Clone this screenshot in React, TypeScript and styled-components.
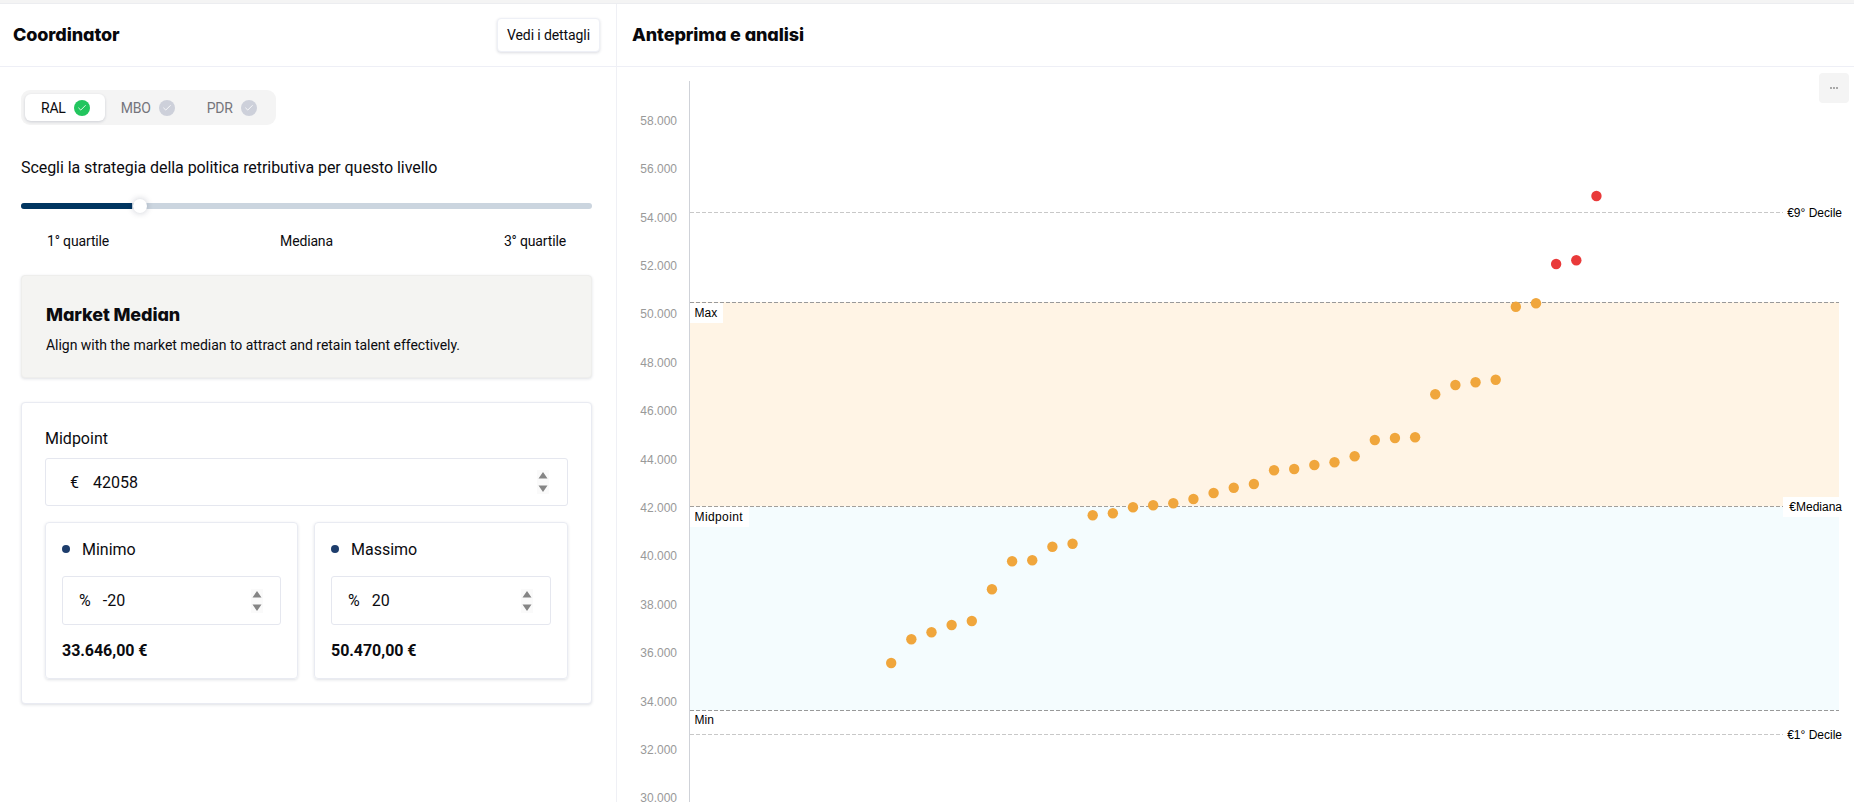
import React from "react";
import styled, { createGlobalStyle } from "styled-components";
import { Check } from "lucide-react";

const Global = createGlobalStyle`
  html, body { margin: 0; padding: 0; background: #fff; height: 100%; overflow: hidden; }
  #root { height: 100%; }
  * { box-sizing: border-box; }
`;

const BODY = `Roboto, "Liberation Sans", sans-serif`;
const HEAD = `Inter, Lato, "Liberation Sans", sans-serif`;

const Page = styled.div`
  height: 802px;
  display: flex;
  flex-direction: column;
  font-family: ${BODY};
  color: #0b0b0f;
`;
const TopStrip = styled.div`
  height: 4px;
  flex: none;
  background: #f4f4f4;
  border-bottom: 1px solid #ecedf0;
`;
const Main = styled.div`
  flex: 1;
  display: flex;
  min-height: 0;
`;
const LeftPanel = styled.section`
  width: 617px;
  flex: none;
  border-right: 1px solid #eff0f5;
  display: flex;
  flex-direction: column;
`;
const RightPanel = styled.section`
  flex: 1;
  min-width: 0;
  display: flex;
  flex-direction: column;
  position: relative;
`;
const PanelHeader = styled.header<{ $pad: number }>`
  height: 63px;
  flex: none;
  border-bottom: 1px solid #eeeff6;
  display: flex;
  align-items: center;
  justify-content: space-between;
  padding: 0 16px 0 ${(p) => p.$pad}px;
`;
const PanelTitle = styled.h1`
  margin: 0;
  font-family: ${HEAD};
  font-feature-settings: "cv11" 1;
  font-weight: 800;
  font-size: 18px;
  letter-spacing: -0.1px;
  line-height: 24px;
  color: #08080c;
`;
const DetailsButton = styled.button`
  width: 103px;
  height: 34px;
  margin-top: -1px;
  background: #fff;
  border: 1px solid #eef0f6;
  border-radius: 4px;
  box-shadow: 0 1px 3px rgba(30, 40, 70, 0.16);
  font-family: ${BODY};
  font-size: 14px;
  letter-spacing: -0.1px;
  color: #0b0b0f;
  padding: 0;
`;
const LeftBody = styled.div`
  padding: 23px 24px 0 21px;
  display: flex;
  flex-direction: column;
  align-items: stretch;
`;
const Tabs = styled.div`
  align-self: flex-start;
  width: 255px;
  height: 35px;
  padding: 4px;
  background: #f4f4f4;
  border-radius: 9px;
  display: flex;
`;
const Tab = styled.div<{ $active?: boolean }>`
  height: 27px;
  padding: 0 ${(p) => (p.$active ? 15 : 16)}px 0 16px;
  display: flex;
  align-items: center;
  gap: 8px;
  border-radius: 6px;
  font-size: 14px;
  letter-spacing: -0.2px;
  background: ${(p) => (p.$active ? "#fff" : "transparent")};
  color: ${(p) => (p.$active ? "#0b0b0f" : "#75757c")};
  box-shadow: ${(p) => (p.$active ? "0 1px 3px rgba(30,40,70,0.18)" : "none")};
`;
const CheckBadge = styled.span<{ $on?: boolean }>`
  width: 16px;
  height: 16px;
  border-radius: 50%;
  background: ${(p) => (p.$on ? "#22c55e" : "#cdd0da")};
  color: #fff;
  display: inline-flex;
  align-items: center;
  justify-content: center;
`;
const StrategyTitle = styled.p`
  margin: 32px 0 0;
  font-size: 16px;
  letter-spacing: -0.06px;
  line-height: 22px;
  color: #0b0b0f;
`;
const Slider = styled.div`
  margin-top: 24px;
  height: 6px;
  border-radius: 3px;
  background: #cbd5df;
  position: relative;
`;
const SliderFill = styled.div`
  height: 100%;
  background: #003560;
  border-radius: 3px 0 0 3px;
`;
const SliderThumb = styled.div`
  position: absolute;
  top: -4px;
  width: 14px;
  height: 14px;
  margin-left: -7px;
  background: #fff;
  border-radius: 50%;
  box-shadow: 0 0 6px rgba(30, 40, 70, 0.25);
`;
const SliderLabels = styled.div`
  margin-top: 23px;
  padding: 0 26px;
  display: flex;
  justify-content: space-between;
  font-size: 14px;
  letter-spacing: -0.15px;
  line-height: 18px;
`;
const StrategyCard = styled.div`
  margin-top: 25px;
  height: 103px;
  padding: 4px 24px 0;
  background: #f4f4f2;
  border: 1px solid #eeeeec;
  border-radius: 4px;
  box-shadow: 0 1px 3px rgba(30, 40, 70, 0.14);
  display: flex;
  flex-direction: column;
  justify-content: center;
`;
const StrategyName = styled.h2`
  margin: 0;
  font-family: ${HEAD};
  font-feature-settings: "cv11" 1;
  font-weight: 800;
  font-size: 18px;
  letter-spacing: -0.1px;
  line-height: 24px;
`;
const StrategyText = styled.p`
  margin: 8px 0 0;
  font-size: 14px;
  letter-spacing: -0.03px;
  line-height: 20px;
`;
const MidpointCard = styled.div`
  margin-top: 24px;
  height: 302px;
  padding: 25px 23px 24px;
  background: #fff;
  border: 1px solid #e9ebf2;
  border-radius: 4px;
  box-shadow: 0 1px 3px rgba(30, 40, 70, 0.14);
`;
const FieldLabel = styled.div`
  font-size: 16px;
  line-height: 22px;
`;
const NumberField = styled.div<{ $h: number; $pad: number; $gap: number; $spin: number }>`
  height: ${(p) => p.$h}px;
  padding: 0 ${(p) => p.$spin}px 0 ${(p) => p.$pad}px;
  border: 1px solid #e5e7ef;
  border-radius: 3px;
  background: #fff;
  display: flex;
  align-items: center;
  gap: ${(p) => p.$gap}px;
  font-size: 16px;
`;
const MidpointField = styled(NumberField)`
  margin-top: 8px;
`;
const FieldValue = styled.span`
  flex: 1;
`;
const SubGrid = styled.div`
  margin-top: 16px;
  display: grid;
  grid-template-columns: 253px 1fr;
  gap: 16px;
`;
const SubCard = styled.div`
  height: 157px;
  padding: 15px 16px 16px;
  border: 1px solid #e9ebf2;
  border-radius: 4px;
  box-shadow: 0 1px 3px rgba(30, 40, 70, 0.14);
  display: flex;
  flex-direction: column;
`;
const SubHead = styled.div`
  display: flex;
  align-items: center;
  gap: 12px;
  height: 22px;
  font-size: 16px;
`;
const Bullet = styled.span`
  width: 8px;
  height: 8px;
  border-radius: 50%;
  background: #1d3d6c;
`;
const SubField = styled(NumberField)`
  margin-top: 16px;
`;
const Amount = styled.div`
  margin-top: 16px;
  font-size: 16px;
  font-weight: 700;
  letter-spacing: -0.05px;
  line-height: 20px;
`;
const ChartArea = styled.div`
  flex: 1;
  min-height: 0;
  position: relative;
`;
const ChartSvg = styled.svg`
  display: block;
  width: 100%;
  height: 100%;
`;
const MoreButton = styled.div`
  position: absolute;
  top: 6px;
  right: 5px;
  width: 30px;
  height: 30px;
  border-radius: 4px;
  background: #f4f4f4;
  display: flex;
  align-items: center;
  justify-content: center;
  gap: 1px;
`;
const MoreDot = styled.i`
  width: 2px;
  height: 2px;
  background: #a9a9a9;
`;

const Spinner = () => (
  <svg width="12" height="24" viewBox="0 0 12 24" style={{ display: "block" }}>
    <rect width="12" height="24" fill="#fafafa" />
    <path d="M6 2 L10.5 8.5 H1.5 Z M6 22 L1.5 15.5 H10.5 Z" fill="#858585" />
  </svg>
);

const Amounts = ({ sym, val }: { sym: string; val: string }) => (
  <>
    <span>{sym}</span>
    <FieldValue>{val}</FieldValue>
    <Spinner />
  </>
);

const ticks: Array<[string, number]> = [
  ["58.000", 125], ["56.000", 172.5], ["54.000", 222], ["52.000", 270], ["50.000", 317.5],
  ["48.000", 366.5], ["46.000", 414.5], ["44.000", 463.5], ["42.000", 512], ["40.000", 560],
  ["38.000", 608.5], ["36.000", 657], ["34.000", 705.5], ["32.000", 753.5], ["30.000", 802],
];

const dotX = (i: number) => 891.2 + i * 20.15;
const dotY = [
  663, 639.3, 632.3, 625, 621, 589.3, 561.3, 560.3, 546.7, 543.7, 515.3, 513.3, 507.3, 505.3, 503.3,
  499, 493, 487.7, 484, 470.3, 469, 465, 462.3, 456.3, 440, 438, 437.3, 394.3, 385, 382.3, 379.7,
  306.7, 303.3, 264, 260.3, 196,
];

const App = () => (
  <Page>
    <Global />
    <TopStrip />
    <Main>
      <LeftPanel>
        <PanelHeader $pad={13}>
          <PanelTitle>Coordinator</PanelTitle>
          <DetailsButton>Vedi i dettagli</DetailsButton>
        </PanelHeader>
        <LeftBody>
          <Tabs>
            <Tab $active>
              RAL
              <CheckBadge $on><Check size={10} strokeWidth={2} /></CheckBadge>
            </Tab>
            <Tab>
              MBO
              <CheckBadge><Check size={10} strokeWidth={2} /></CheckBadge>
            </Tab>
            <Tab>
              PDR
              <CheckBadge><Check size={10} strokeWidth={2} /></CheckBadge>
            </Tab>
          </Tabs>
          <StrategyTitle>Scegli la strategia della politica retributiva per questo livello</StrategyTitle>
          <Slider>
            <SliderFill style={{ width: "19.5%" }} />
            <SliderThumb style={{ left: "20.8%" }} />
          </Slider>
          <SliderLabels>
            <span>1° quartile</span>
            <span>Mediana</span>
            <span>3° quartile</span>
          </SliderLabels>
          <StrategyCard>
            <StrategyName>Market Median</StrategyName>
            <StrategyText>Align with the market median to attract and retain talent effectively.</StrategyText>
          </StrategyCard>
          <MidpointCard>
            <FieldLabel>Midpoint</FieldLabel>
            <MidpointField $h={48} $pad={24} $gap={14} $spin={18}>
              <Amounts sym="€" val="42058" />
            </MidpointField>
            <SubGrid>
              <SubCard>
                <SubHead><Bullet />Minimo</SubHead>
                <SubField $h={49} $pad={16} $gap={12} $spin={17}>
                  <Amounts sym="%" val="-20" />
                </SubField>
                <Amount>33.646,00 €</Amount>
              </SubCard>
              <SubCard>
                <SubHead><Bullet />Massimo</SubHead>
                <SubField $h={49} $pad={16} $gap={12} $spin={17}>
                  <Amounts sym="%" val="20" />
                </SubField>
                <Amount>50.470,00 €</Amount>
              </SubCard>
            </SubGrid>
          </MidpointCard>
        </LeftBody>
      </LeftPanel>
      <RightPanel>
        <PanelHeader $pad={15}>
          <PanelTitle>Anteprima e analisi</PanelTitle>
        </PanelHeader>
        <ChartArea>
          <ChartSvg viewBox="617 67 1237 735" preserveAspectRatio="none">
            <rect x="690" y="302" width="1149" height="204.5" fill="#fff4e5" />
            <rect x="690" y="506.5" width="1149" height="204" fill="#f4fcfe" />
            <line x1="689.5" y1="81" x2="689.5" y2="802" stroke="#cfd2d8" />
            {ticks.map(([t, y]) => (
              <text key={t} x="677" y={y} textAnchor="end" fontFamily="Liberation Sans, sans-serif" fontSize="12" fill="#999">
                {t}
              </text>
            ))}
            <g strokeDasharray="4 2" fill="none">
              <line x1="690" y1="212.5" x2="1783" y2="212.5" stroke="#c8c8c8" />
              <line x1="690" y1="734.5" x2="1783" y2="734.5" stroke="#c8c8c8" />
              <line x1="690" y1="302.5" x2="1839" y2="302.5" stroke="#999" />
              <line x1="690" y1="506.5" x2="1783" y2="506.5" stroke="#a39f9a" />
              <line x1="690" y1="710.5" x2="1839" y2="710.5" stroke="#999" />
            </g>
            <g fontFamily="Liberation Sans, sans-serif" fontSize="12" fill="#000">
              <rect x="690" y="303" width="33" height="20" fill="#fff" />
              <text x="694.5" y="317">Max</text>
              <rect x="690" y="507" width="59" height="20" fill="#fff" />
              <text x="694.5" y="521" letterSpacing="0.4">Midpoint</text>
              <rect x="690" y="711" width="26" height="20" fill="#fff" />
              <text x="694.5" y="724">Min</text>
              <rect x="1783" y="497" width="61" height="20" fill="#fff" />
              <text x="1842" y="511" textAnchor="end">€Mediana</text>
              <text x="1842" y="217" textAnchor="end">€9° Decile</text>
              <text x="1842" y="739" textAnchor="end">€1° Decile</text>
            </g>
            {dotY.map((y, i) => (
              <circle key={i} cx={dotX(i)} cy={y} r="5.2" fill={i >= 33 ? "#e93a3a" : "#f0a63c"} />
            ))}
          </ChartSvg>
          <MoreButton><MoreDot /><MoreDot /><MoreDot /></MoreButton>
        </ChartArea>
      </RightPanel>
    </Main>
  </Page>
);

export default App;
